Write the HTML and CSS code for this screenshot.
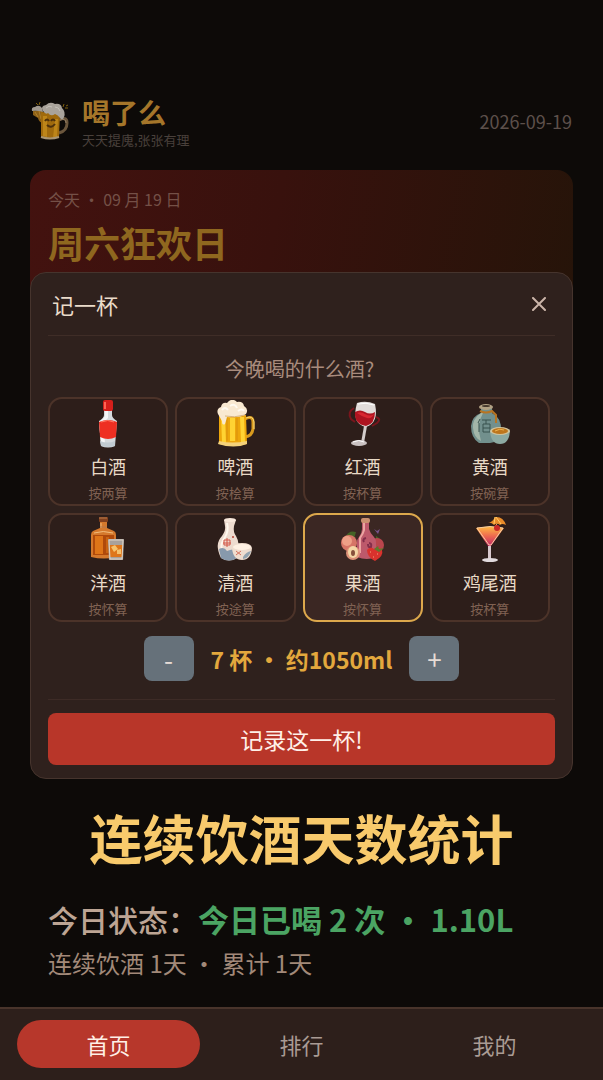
FILE: index.html
```
<!DOCTYPE html>
<html lang="zh-CN">
<head>
    <meta charset="UTF-8">
    <meta name="viewport" content="width=device-width, initial-scale=1.0">
    <title>喝了么</title>
    <link rel="stylesheet" href="styles.css">
</head>
<body>
    <header class="app-header">
        <svg class="app-logo" viewBox="0 0 40 40" aria-hidden="true">
            <path d="M28 19q8-4 8 3 0 8-8 10" fill="none" stroke="#6b563c" stroke-width="3"/>
            <path d="M29 19q6-2 6 3" fill="none" stroke="#9a8468"/>
            <path d="M2 10l9-1 2 13q-5 0-6-5l-5-3z" fill="#8c6017"/>
            <path d="M4 11l3 5M8 10l2 8" stroke="#b0802a"/>
            <path d="M1 10q-1-4 3-4 4-3 7 1l1 4q-6-2-11-1z" fill="#a19a90"/>
            <path d="M10 11l19 1-1 24q-9 3-18 0z" fill="#a06a0d"/>
            <path d="M12 15h4v21l-4-1zM24 18h3l-1 18-4 1z" fill="#bd8519"/>
            <path d="M12 10q-3-5 3-6 4-4 9-1 6-1 7 4 4 4 2 9-1 4-4 1-2-3-5-4-4 3-7-1-2 2-5-2z" fill="#a9a39b"/>
            <path d="M15 7q3-3 6-1M24 6q4 0 5 4" fill="none" stroke="#c4c0b8"/>
            <path d="M14 20q2-3 4 0M20 20q2-3 4 0M16 24q4 4 8-1" fill="none" stroke="#4d300c" stroke-width="2"/>
            <path d="M10 36q9 3 18 0" fill="none" stroke="#a99573" stroke-width="2"/>
            <path d="M5 2l2 2M9 1l-1 3M33 3l-1 3M37 4l-2 1M37 7h-3" stroke="#80600f"/>
        </svg>
        <div class="app-name">
            <h1>喝了么</h1>
            <p>天天提廆,张张有理</p>
        </div>
        <time class="app-date" datetime="2026-09-19">2026-09-19</time>
    </header>

    <main class="content">
        <section class="today-card">
            <p>今天 ・ 09 月 19 日</p>
            <h2>周六狂欢日</h2>
        </section>

        <!-- Record dialog -->
        <section class="record-modal" role="dialog" aria-labelledby="recordTitle">
            <div class="modal-header">
                <h3 id="recordTitle">记一杯</h3>
                <button type="button" class="close-btn" aria-label="关闭">
                    <svg viewBox="0 0 14 14"><path d="M1 1l12 12M13 1L1 13" stroke="#cbb5a9" stroke-width="2" stroke-linecap="round"/></svg>
                </button>
            </div>
            <p class="question">今晚喝的什么酒?</p>

            <div class="drink-grid">
                <button type="button" class="drink">
                    <svg viewBox="0 0 48 48">
                        <path d="M20 10h8v5q0 3 5 6l-2 25q-7 3-14 0l-2-25q5-3 5-6z" fill="#d5dadd"/>
                        <path d="M21 11h3v7l-4 4 1 24-4-1-2-23q6-4 6-7z" fill="#f4f6f7"/>
                        <path d="M16 41l1 5q7 2 14 0v-5q-7 3-15 0z" fill="#c1cbd1"/>
                        <rect x="19" y="0" width="10" height="11" rx="2" fill="#d51f1b"/>
                        <path d="M20 2h2v7h-2z" fill="#ff6453"/>
                        <path d="M15 22q9-4 18 0l-1 15q-8 4-16 0z" fill="#ee2f22"/>
                        <path d="M17 22q7-3 13 0" fill="none" stroke="#ff7a66"/>
                    </svg>
                    <span class="drink-name">白酒</span>
                    <span class="drink-unit">按两算</span>
                </button>
                <button type="button" class="drink">
                    <svg viewBox="0 0 48 48">
                        <path d="M34 19q8-4 8 3v7q-1 7-8 8" fill="none" stroke="#d99b1e" stroke-width="3"/>
                        <path d="M35 18q7-3 8 4v7" fill="none" stroke="#f8d878"/>
                        <path d="M8 15h27l1 29q-13 4-28 0z" fill="#eda60b"/>
                        <path d="M10 16h4l1 27-4-1zM19 18h5v23h-5zM29 17h4l1 25h-4z" fill="#ffd333"/>
                        <path d="M16 18v23M26 18v23" stroke="#d98f0c"/>
                        <path d="M8 41q13 3 28 0v3q-13 5-29 0z" fill="#f5d27b"/>
                        <path d="M7 14q-2-5 3-7 1-5 6-4 5-6 10-1 6-1 7 4 5 3 2 8-5 4-19 3-1 4-2 7-3 2-3-3z" fill="#f9e9d1"/>
                        <path d="M11 10q3-4 6 0M19 6q5-3 7 2M27 11q4-3 6 0" fill="none" stroke="#fffaf0" stroke-width="2"/>
                        <path d="M14 16q9 2 20-1" fill="none" stroke="#d7b481"/>
                    </svg>
                    <span class="drink-name">啤酒</span>
                    <span class="drink-unit">按桧算</span>
                </button>
                <button type="button" class="drink">
                    <svg viewBox="0 0 48 48">
                        <path d="M15 8q-7 4-3 11l4 3M37 17q6 2 1 6l-5 3" fill="none" stroke="#79151c" stroke-width="2"/>
                        <path d="M18 3q9-3 18 1 4 19-9 23-15-3-9-24z" fill="#e2dcda"/>
                        <path d="M16 12q5-3 10 0t10 0q0 12-9 14-12-2-11-14z" fill="#ad1420"/>
                        <path d="M18 13q4-2 8 1 6 3 9 0-2 5-7 4-6-2-10-5z" fill="#d92731"/>
                        <path d="M25 26h3l-3 17h-3z" fill="#d4cdcc"/>
                        <ellipse cx="20" cy="43" rx="8" ry="3" fill="#c9c1c1"/>
                        <path d="M14 42q6-3 11 0" fill="none" stroke="#fff"/>
                        <path d="M19 4q8-2 16 1" fill="none" stroke="#fff"/>
                    </svg>
                    <span class="drink-name">红酒</span>
                    <span class="drink-unit">按杯算</span>
                </button>
                <button type="button" class="drink">
                    <svg viewBox="0 0 48 48">
                        <path d="M15 8h11v5q10 5 9 18-2 12-11 12H13Q5 38 5 26q1-10 10-13z" fill="#72908d"/>
                        <path d="M15 13q-9 6-8 15 1 10 8 13-5-16 2-28z" fill="#a3b6a9"/>
                        <ellipse cx="20" cy="7" rx="7" ry="3" fill="#b1a184"/>
                        <ellipse cx="20" cy="6" rx="4" ry="1" fill="#45382d"/>
                        <path d="M14 11q6 3 12 0l4 4v8" fill="none" stroke="#b87523" stroke-width="2"/>
                        <path d="M16 20h9M17 24h7v8h-7zM17 28h7M20 20v4M14 19l-2 4M13 23v9" fill="none" stroke="#38534f"/>
                        <path d="M24 31h20q-1 13-10 13T24 31z" fill="#8daaa2"/>
                        <ellipse cx="34" cy="31" rx="10" ry="4" fill="#d1c49c"/>
                        <ellipse cx="34" cy="31" rx="8" ry="3" fill="#bd761d"/>
                        <path d="M29 31q5-3 9-1" fill="none" stroke="#efb550"/>
                    </svg>
                    <span class="drink-name">黄酒</span>
                    <span class="drink-unit">按碗算</span>
                </button>
                <button type="button" class="drink">
                    <svg viewBox="0 0 48 48">
                        <path d="M16 5h7v7l7 3q2 1 2 4v22q-12 3-25 0V19q0-3 2-4l7-3z" fill="#d5792c"/>
                        <path d="M9 19h21v20H9z" fill="#b04a0b"/>
                        <path d="M11 20h8v18h-8z" fill="#df7518"/>
                        <path d="M22 21h3v16h-3z" fill="#c96312"/>
                        <path d="M10 17q9-3 19 0M17 7v5" fill="none" stroke="#f2bd7c"/>
                        <rect x="15" y="1" width="9" height="5" rx="1" fill="#82401d"/>
                        <path d="M15 2h8M16 11h7" stroke="#b77b4d"/>
                        <path d="M24 23h16l-1 21H25z" fill="#a8a19b"/>
                        <path d="M25 29h14l-1 12H26z" fill="#de761a"/>
                        <path d="M27 31l4-2 3 4-4 3zM33 34l4-1v5h-4z" fill="#f5c16b"/>
                        <path d="M25 24h14l-1 19H26z" fill="none" stroke="#ded4c8"/>
                    </svg>
                    <span class="drink-name">洋酒</span>
                    <span class="drink-unit">按怀算</span>
                </button>
                <button type="button" class="drink">
                    <svg viewBox="0 0 48 48">
                        <path d="M13 4h12l-2 6q-1 6 2 10 5 8 1 22-8 5-16 0-7-14 1-22 4-6 3-10z" fill="#eddbcf"/>
                        <path d="M16 7q2 8-2 14-5 7-3 13" fill="none" stroke="#fff8ed" stroke-width="2"/>
                        <ellipse cx="19" cy="4" rx="6" ry="2" fill="#f8e8dc"/>
                        <path d="M8 33q5-3 8 2 6-3 11 0l-1 7q-8 5-16 0z" fill="#8799ac"/>
                        <path d="M13 24h6v5h-6zM12 27h8M16 22v9" fill="none" stroke="#d45948"/>
                        <circle cx="22" cy="21" r="1" fill="#b64436"/>
                        <path d="M21 32q1-5 10-5t10 5q-1 12-10 12T21 32z" fill="#efddcf"/>
                        <ellipse cx="31" cy="31" rx="9" ry="3" fill="#fff1e4"/>
                        <path d="M25 35l5 4M30 35l-5 4" stroke="#d4705c"/>
                        <path d="M32 41q3-5 8-6-2 7-8 8z" fill="#94a4b0"/>
                    </svg>
                    <span class="drink-name">清酒</span>
                    <span class="drink-unit">按途算</span>
                </button>
                <button type="button" class="drink selected" aria-pressed="true">
                    <svg viewBox="0 0 48 48">
                        <path d="M7 20q3-6 10-4l-2 7M37 20q6 3 6 11l-6-3" fill="#446326"/>
                        <circle cx="10" cy="27" r="8" fill="#d67566"/>
                        <circle cx="8" cy="25" r="5" fill="#eea087"/>
                        <circle cx="38" cy="29" r="7" fill="#b9464d"/>
                        <path d="M23 5h7v8q1 4 5 8 2 2 2 6v14q-9 4-19 0V27q0-4 2-6 3-4 3-8z" fill="#bd596b"/>
                        <path d="M25 7v7q-1 4-4 8v15" fill="none" stroke="#eca4a1" stroke-width="2"/>
                        <rect x="22" y="2" width="9" height="5" rx="2" fill="#ca9070"/>
                        <path d="M27 22q-4 1-2 4M30 27q3 0 2 4-3 1-3-3" fill="none" stroke="#832e4a" stroke-width="2"/>
                        <circle cx="14" cy="37" r="7" fill="#dd9278"/>
                        <ellipse cx="14" cy="36" rx="5" ry="6" fill="#f5d7a6"/>
                        <ellipse cx="14" cy="37" rx="2" ry="3" fill="#87513c"/>
                        <path d="M28 34q3-4 7-1 6-3 8 1 2 6-7 11-8-4-8-11z" fill="#d9322d"/>
                        <path d="M31 36h1M38 38h1M34 41h1" stroke="#f4a07b"/>
                        <path d="M35 33l4-3 1 3 5-1-5 4z" fill="#5f7a2e"/>
                        <path d="M35 13l3 2 3-2-2 5z" fill="#77528a"/>
                    </svg>
                    <span class="drink-name">果酒</span>
                    <span class="drink-unit">按怀算</span>
                </button>
                <button type="button" class="drink">
                    <svg viewBox="0 0 48 48">
                        <defs>
                            <linearGradient id="cocktail" x2="0" y2="1">
                                <stop stop-color="#ffba42"/>
                                <stop offset="0.5" stop-color="#ee6750"/>
                                <stop offset="1" stop-color="#bd2868"/>
                            </linearGradient>
                        </defs>
                        <path d="M22 27h3v17h-3z" fill="#d8c8ce"/>
                        <path d="M10 12q14-3 28 0L25 30h-3z" fill="url(#cocktail)"/>
                        <path d="M11 12q13-3 26 0L25 29h-2z" fill="none" stroke="#f8cca1"/>
                        <ellipse cx="24" cy="44" rx="8" ry="2" fill="#e1dadd"/>
                        <path d="M27 14l7-11" stroke="#e0a05c"/>
                        <path d="M22 7q5-1 7-6 8-1 11 8-4-2-6 0-3-3-6 0-3-3-6-2z" fill="#e98b29"/>
                        <path d="M29 1l-1 7M30 1l5 7" stroke="#ffcb65"/>
                        <circle cx="31" cy="12" r="3" fill="#ca2828"/>
                    </svg>
                    <span class="drink-name">鸡尾酒</span>
                    <span class="drink-unit">按杯算</span>
                </button>
            </div>

            <!-- Amount -->
            <div class="amount">
                <button type="button" class="step-btn" aria-label="减少">-</button>
                <output class="amount-value">7 杯 • 约1050ml</output>
                <button type="button" class="step-btn" aria-label="增加">+</button>
            </div>

            <div class="modal-footer">
                <button type="button" class="submit-btn">记录这一杯!</button>
            </div>
        </section>

        <!-- Streak stats -->
        <section class="stats">
            <h2>连续饮酒天数统计</h2>
            <p class="status">今日状态：<strong>今日已喝 2 次 • 1.10L</strong></p>
            <p class="streak">连续饮酒 1天 • 累计 1天</p>
        </section>
    </main>

    <nav class="tab-bar">
        <a href="#home" class="tab active">首页</a>
        <a href="#rank" class="tab">排行</a>
        <a href="#mine" class="tab">我的</a>
    </nav>
</body>
</html>
```
FILE: styles.css
```
/* General Styles */
* {
    box-sizing: border-box;
}

body {
    font-family: "Noto Sans CJK SC", sans-serif;
    margin: 0;
    min-height: 100vh;
    display: flex;
    flex-direction: column;
    background-color: #0d0a08;
    color: #e6d6c8;
}

h1, h2, h3, p {
    margin: 0;
}

button {
    font-family: inherit;
    padding: 0;
    cursor: pointer;
}

/* Header */
.app-header {
    display: flex;
    align-items: center;
    padding: 95px 31px 20px;
}

.app-logo {
    width: 40px;
    height: 40px;
    margin: 0 11px 4px 0;
}

.app-name h1 {
    font-size: 28px;
    font-weight: 700;
    line-height: 34px;
    color: #a5762a;
}

.app-name p {
    font-size: 13px;
    line-height: 21px;
    color: #49403b;
}

.app-date {
    margin: 0 0 4px auto;
    font-size: 18px;
    line-height: 24px;
    color: #5d504b;
}

.content {
    padding: 0 30px;
}

/* Today card, partly under the dialog */
.today-card {
    padding: 18px 18px 36px;
    border-radius: 16px;
    background: linear-gradient(100deg, #43120f 0%, #38110d 45%, #261409 100%);
}

.today-card p {
    font-size: 16px;
    line-height: 22px;
    color: #745047;
}

.today-card h2 {
    margin-top: 10px;
    font-size: 36px;
    font-weight: 700;
    line-height: 44px;
    color: #8f671f;
}

/* Record dialog */
.record-modal {
    position: relative;
    margin-top: -28px;
    padding: 0 17px 13px;
    border: 1px solid #46342d;
    border-radius: 16px;
    background-color: #2f211d;
}

.modal-header {
    display: flex;
    align-items: center;
    justify-content: space-between;
    height: 63px;
    padding: 0 4px;
    border-bottom: 1px solid #3f2d27;
}

.modal-header h3 {
    font-size: 22px;
    font-weight: 400;
    color: #eadbca;
}

.close-btn {
    width: 24px;
    height: 24px;
    border: none;
    background: none;
}

.close-btn svg {
    display: block;
    width: 14px;
    height: 14px;
    margin: auto;
}

.question {
    margin: 19px 0 14px;
    padding-right: 4px;
    font-size: 20px;
    line-height: 28px;
    text-align: center;
    color: #a98c7d;
}

.drink-grid {
    display: grid;
    grid-template-columns: repeat(4, 1fr);
    gap: 7px;
    padding-right: 5px;
}

.drink {
    display: flex;
    flex-direction: column;
    align-items: center;
    padding: 1px 0;
    border: 2px solid #4c3329;
    border-radius: 14px;
    background-color: #2d1e1a;
}

.drink.selected {
    border-color: #dca84c;
    background-color: #3b2723;
}

.drink svg {
    width: 48px;
    height: 48px;
}

.drink-name {
    margin-top: 5px;
    font-size: 18px;
    line-height: 26px;
    color: #e9dac7;
}

.drink-unit {
    margin-top: 3px;
    font-size: 13px;
    line-height: 21px;
    color: #806253;
}

/* Amount */
.amount {
    display: flex;
    align-items: center;
    justify-content: center;
    gap: 17px;
    margin: 14px 0 18px;
}

.step-btn {
    width: 50px;
    height: 45px;
    border: none;
    border-radius: 8px;
    background-color: #66717a;
    color: #e6dcd6;
    font-size: 26px;
}

.amount-value {
    font-size: 23px;
    font-weight: 700;
    line-height: 32px;
    color: #e3a83d;
}

.modal-footer {
    padding-top: 13px;
    border-top: 1px solid #3d2b26;
}

.submit-btn {
    display: block;
    width: 100%;
    height: 52px;
    border: none;
    border-radius: 8px;
    background-color: #b83629;
    color: #fff0e8;
    font-size: 23px;
}

/* Stats */
.stats {
    padding: 26px 18px;
}

.stats h2 {
    font-size: 53px;
    font-weight: 700;
    line-height: 64px;
    text-align: center;
    white-space: nowrap;
    color: #f8ca6c;
}

.status {
    margin-top: 30px;
    font-size: 30px;
    font-weight: 500;
    line-height: 40px;
    white-space: nowrap;
    color: #bda594;
}

.status strong {
    font-size: 31px;
    font-weight: 700;
    color: #4ba463;
}

.streak {
    margin-top: 8px;
    font-size: 24px;
    line-height: 32px;
    color: #a28979;
}

/* Tab bar */
.tab-bar {
    display: grid;
    grid-template-columns: repeat(3, 1fr);
    gap: 10px;
    margin-top: auto;
    padding: 11px 17px 12px;
    border-top: 2px solid #49342b;
    background-color: #2d1f1b;
}

.tab {
    border-radius: 24px;
    font-size: 22px;
    line-height: 48px;
    text-align: center;
    text-decoration: none;
    color: #a99b94;
}

.tab.active {
    background-color: #b7372b;
    color: #fff0e7;
}
```
